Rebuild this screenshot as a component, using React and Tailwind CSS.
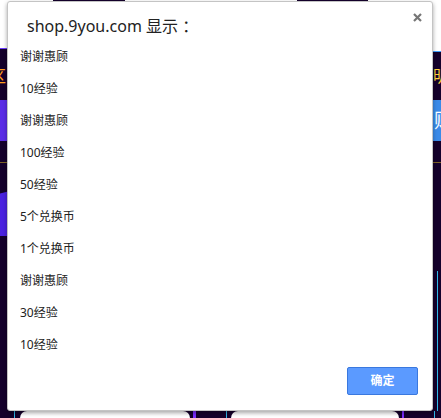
import React from 'react'

const prizes = ["谢谢惠顾", "10经验", "谢谢惠顾", "100经验", "50经验", "5个兑换币", "1个兑换币", "谢谢惠顾", "30经验", "10经验"]

const Background = () => {
    return (
        <div className="flex flex-col w-full h-full">
            <div className="h-[48px] bg-white relative">
                <div className="flex h-[1px]">
                    <div className="ml-[53px] w-[72px] bg-[#14002b]" />
                    <div className="ml-[172px] w-[71px] bg-[#14002b]" />
                </div>
            </div>
            <div className="flex justify-between h-[4px]">
                <div className="w-[40px] h-[1px] bg-[#6b3bff]" />
                <div className="w-[40px] h-[4px] bg-white border-b border-[#3fa0ff]" />
            </div>
            <div className="flex justify-between items-center h-[48px] text-[16px] leading-none">
                <div className="w-[7px] overflow-hidden">
                    <span className="block ml-[-10px] text-[#ff9d1c]">区</span>
                </div>
                <div className="w-[8px] overflow-hidden">
                    <span className="block w-[32px] text-[#ffd23c]">明白</span>
                </div>
            </div>
            <div className="flex justify-between h-[41px]">
                <div className="w-[60px] bg-[#5a2ce6]" />
                <div className="w-[40px] bg-[#3a8ae8] text-white text-[20px] leading-[41px] pl-[33px] overflow-hidden whitespace-nowrap">购</div>
            </div>
            <div className="h-[21px]" />
            <div className="h-px bg-[#7d6326]" />
            <div className="h-[23px]" />
            <div className="flex justify-between h-[50px]">
                <div className="w-[30px] bg-[#4a22e0] [clip-path:polygon(0_15%,100%_0,100%_100%,0_100%)]" />
            </div>
            <div className="flex-1 flex justify-end">
                <div className="mt-[35px] mr-[3px] w-px bg-[#2fb8e8]" />
            </div>
            <div className="flex h-[7px]">
                <div className="ml-[14px] w-px bg-[#2fb8e8]" />
                <div className="ml-[5px] w-[170px] bg-white rounded-t-[8px]" />
                <div className="ml-[3px] w-[3px] bg-[#7a2cff]" />
                <div className="ml-[30px] w-px bg-[#2fb8e8]" />
                <div className="ml-[4px] w-[168px] bg-white rounded-t-[8px]" />
                <div className="ml-[3px] w-[2px] bg-[#7a2cff]" />
                <div className="ml-[30px] w-px bg-[#2fb8e8]" />
            </div>
        </div>
    )
}

export default function App() {
    return (
        <div className="relative w-[441px] h-[418px] overflow-hidden bg-[#14002b] font-['Noto_Sans','Noto_Sans_CJK_SC',sans-serif]">
            <Background />
            <div className="absolute left-[7px] top-[1px] w-[426px] h-[410px] bg-white border border-[#c4c4c4] rounded-[3px] shadow-[0_2px_4px_rgba(0,0,0,0.35)] flex flex-col">
                <div className="flex justify-between h-[39px]">
                    <div className="pl-[19px] pt-[13px] text-[16px] leading-[22px] text-[#222]">shop.9you.com 显示 ：</div>
                    <button className="mt-[9px] mr-[9px] w-[12px] h-[12px] flex items-center justify-center">
                        <svg width="9" height="9" viewBox="0 0 9 9">
                            <path d="M1 1L8 8M8 1L1 8" stroke="#767676" strokeWidth="2.2" />
                        </svg>
                    </button>
                </div>
                <div className="flex flex-col pl-[12px]">
                    {prizes.map((p, i) => (
                        <div key={i} className="h-[32px] leading-[32px] text-[12px] text-[#222]">{p}</div>
                    ))}
                </div>
                <div className="flex justify-end mt-[6px] pr-[14px]">
                    <button className="w-[71px] h-[28px] bg-[#5b9aff] border border-[#3a78de] rounded-[2px] text-white text-[12px] font-bold">确定</button>
                </div>
            </div>
        </div>
    )
}
